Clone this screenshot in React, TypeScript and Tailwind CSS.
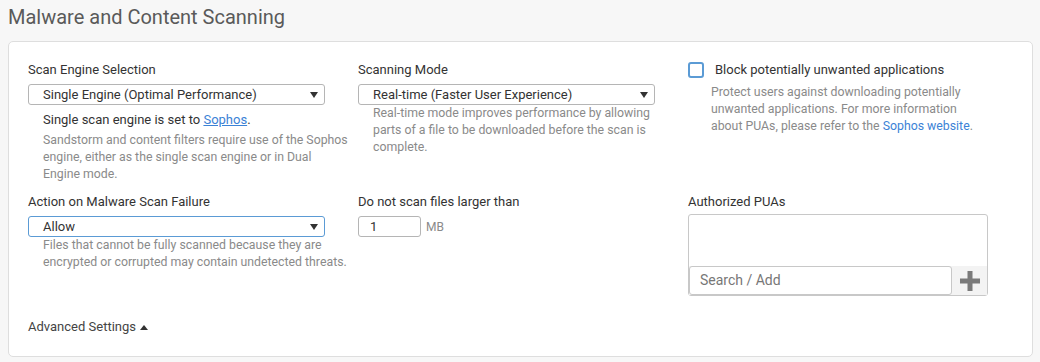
import React from "react";

const Arrow = () => (
  <svg width="8" height="6" viewBox="0 0 8 6" className="shrink-0">
    <path d="M0 0 L8 0 L4 6 Z" fill="#333" />
  </svg>
);

function Select({ value, focused }: { value: string; focused?: boolean }) {
  return (
    <div
      className={
        "flex h-[21px] w-[297px] items-center justify-between rounded-[3px] border bg-white pl-[14px] pr-[6px] text-[13px] text-[#333] " +
        (focused ? "border-[#5b9bd5]" : "border-[#b5b5b5]")
      }
    >
      <span>{value}</span>
      <Arrow />
    </div>
  );
}

export default function App() {
  return (
    <div
      className="h-[362px] w-[1040px] overflow-hidden bg-[#f7f7f7]"
      style={{ fontFamily: "Roboto, 'Liberation Sans', sans-serif" }}
    >
      <div className="pl-[8px] pt-[4px] text-[20px] leading-[26px] text-[#5a5a5a]">
        Malware and Content Scanning
      </div>
      <div className="ml-[8px] mr-[7px] mt-[11px] rounded-[5px] border border-[#dedede] bg-white pb-[21px] pl-[19px] pt-[20px]">
        <div className="grid grid-cols-[330px_330px_330px] gap-y-[11px]">
          {/* Col 1 row 1 */}
          <div>
            <div className="mb-[6px] text-[13px] leading-[16px] text-[#333]">Scan Engine Selection</div>
            <Select value="Single Engine (Optimal Performance)" />
            <div className="mt-[5px] pl-[15px] text-[13px] leading-[20px] text-[#333]">
              Single scan engine is set to{" "}
              <span className="text-[#3b82d6] underline">Sophos</span>.
            </div>
            <div className="mt-[2px] w-[322px] pl-[15px] text-[12.3px] leading-[17px] text-[#8a8a8a]">
              Sandstorm and content filters require use of the Sophos engine, either as the single scan engine or in Dual Engine mode.
            </div>
          </div>
          {/* Col 2 row 1 */}
          <div>
            <div className="mb-[6px] text-[13px] leading-[16px] text-[#333]">Scanning Mode</div>
            <Select value="Real-time (Faster User Experience)" />
            <div className="w-[300px] pl-[15px] text-[12.3px] leading-[17px] text-[#8a8a8a]">
              Real-time mode improves performance by allowing parts of a file to be downloaded before the scan is complete.
            </div>
          </div>
          {/* Col 3 row 1 */}
          <div>
            <div className="flex items-center">
              <div className="h-[16px] w-[16px] rounded-[3px] border-2 border-[#5b9bd5] bg-white" />
              <div className="ml-[11px] text-[13px] leading-[16px] text-[#333]">
                Block potentially unwanted applications
              </div>
            </div>
            <div className="mt-[6px] w-[290px] pl-[23px] text-[12.3px] leading-[17px] text-[#8a8a8a]">
              Protect users against downloading potentially unwanted applications. For more information about PUAs, please refer to the <span className="text-[#3b82d6]">Sophos website</span>.
            </div>
          </div>
          {/* Col 1 row 2 */}
          <div>
            <div className="mb-[6px] text-[13px] leading-[16px] text-[#333]">Action on Malware Scan Failure</div>
            <Select value="Allow" focused />
            <div className="w-[330px] pl-[15px] text-[12.3px] leading-[17px] text-[#8a8a8a]">
              Files that cannot be fully scanned because they are encrypted or corrupted may contain undetected threats.
            </div>
          </div>
          {/* Col 2 row 2 */}
          <div>
            <div className="mb-[6px] text-[13px] leading-[16px] text-[#333]">Do not scan files larger than</div>
            <div className="flex items-center">
              <div className="flex h-[21px] w-[63px] items-center rounded-[3px] border border-[#b5b5b5] pl-[11px] text-[13px] text-[#333]">
                1
              </div>
              <span className="ml-[5px] text-[12px] text-[#8a8a8a]">MB</span>
            </div>
          </div>
          {/* Col 3 row 2 */}
          <div>
            <div className="mb-[4px] text-[13px] leading-[16px] text-[#333]">Authorized PUAs</div>
            <div className="flex h-[82px] w-[300px] flex-col justify-end rounded-[3px] border border-[#c8c8c8] bg-white">
              <div className="flex h-[29px] bg-[#f3f3f3]">
                <div className="flex h-[29px] w-[263px] items-center rounded-[3px] border border-[#c8c8c8] bg-white pl-[10px] text-[14px] text-[#777]">
                  Search / Add
                </div>
                <div className="flex flex-1 items-center justify-center">
                  <svg width="20" height="20" viewBox="0 0 20 20">
                    <rect x="7.5" y="0" width="5" height="20" fill="#7a7a7a" />
                    <rect x="0" y="7.5" width="20" height="5" fill="#7a7a7a" />
                  </svg>
                </div>
              </div>
            </div>
          </div>
        </div>
        <div className="mt-[23px] flex items-center text-[13px] leading-[16px] text-[#444]">
          Advanced Settings
          <svg width="8" height="5" viewBox="0 0 8 5" className="ml-[4px]">
            <path d="M0 5 L8 5 L4 0 Z" fill="#333" />
          </svg>
        </div>
      </div>
    </div>
  );
}
